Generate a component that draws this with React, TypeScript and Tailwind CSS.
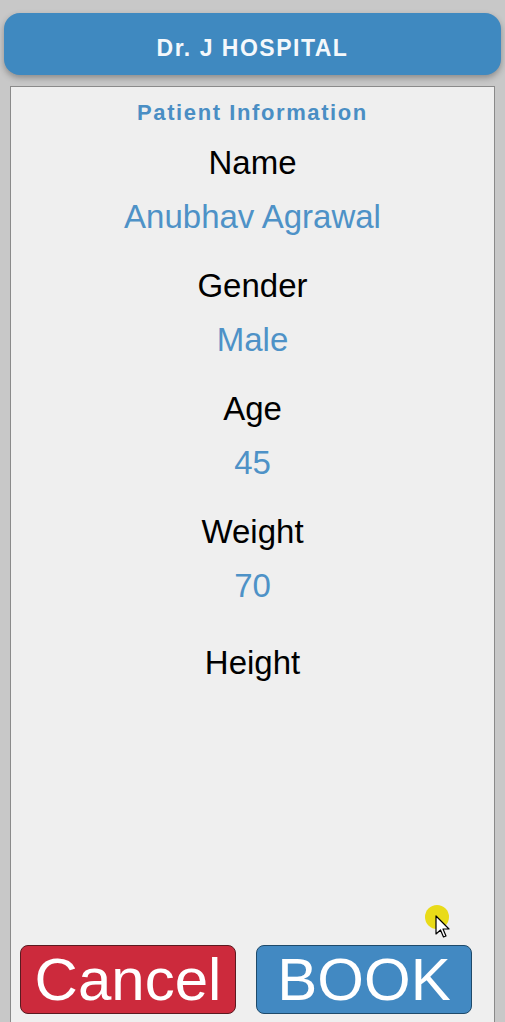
import React from "react";

// Patient details shown on the card
const fields = [
  { label: "Name", value: "Anubhav Agrawal" },
  { label: "Gender", value: "Male" },
  { label: "Age", value: "45" },
  { label: "Weight", value: "70" },
  { label: "Height", value: "" },
];

const font = { fontFamily: '"Liberation Sans", Arial, sans-serif' };

function Field({ label, value, first }: { label: string; value: string; first: boolean }) {
  return (
    <div className={`flex flex-col items-center ${first ? "mt-[18px]" : label === "Height" ? "mt-[39px]" : "mt-[31px]"}`}>
      <div className="text-[33px] leading-[38px] text-black">{label}</div>
      {value && <div className="mt-[16px] text-[33px] leading-[38px] text-[#4e92c7]">{value}</div>}
    </div>
  );
}

export default function App() {
  return (
    <div className="relative h-[1022px] overflow-hidden bg-[#c8c8c8] pt-[13px]" style={font}>
      {/* Header */}
      <header className="mx-[4px] flex h-[62px] items-center justify-center rounded-[16px] bg-[#3f89c0] pt-[8px] shadow-[0_3px_6px_rgba(0,0,0,0.3)]">
        <h1 className="text-[23px] font-bold leading-[28px] tracking-[1.5px] text-[#f4f8fb]">Dr. J HOSPITAL</h1>
      </header>

      {/* Card */}
      <main className="mx-[10px] mt-[11px] h-[1000px] border border-[#8a8a8a] bg-[#efefef]">
        <h2 className="pt-[13px] text-center text-[22px] font-bold leading-[26px] tracking-[1.6px] text-[#4a8ec4]">
          Patient Information
        </h2>

        {fields.map((f, i) => (
          <Field key={f.label} label={f.label} value={f.value} first={i === 0} />
        ))}

        <div className="mt-[263px] flex gap-[20px] pl-[9px]">
          <button className="h-[69px] w-[216px] rounded-[8px] border border-[#5a1a20] bg-[#cc2a3c] text-[60px] leading-none text-white">
            Cancel
          </button>
          <button className="h-[69px] w-[216px] rounded-[8px] border border-[#1f4a6a] bg-[#4289c2] text-[60px] leading-none text-white">
            BOOK
          </button>
        </div>
      </main>

      {/* Screen-recording cursor highlight */}
      <div className="absolute left-[425px] top-[905px] h-[24px] w-[24px] rounded-full bg-[#e8d800]/90" />
      <svg className="absolute left-[435px] top-[915px]" width="16" height="26" viewBox="0 0 16 26">
        <path d="M1 1 L1 19 L5.5 15 L8.5 22 L11 21 L8 14 L14 14 Z" fill="white" stroke="black" strokeWidth="1.2" strokeLinejoin="round" />
      </svg>
    </div>
  );
}
